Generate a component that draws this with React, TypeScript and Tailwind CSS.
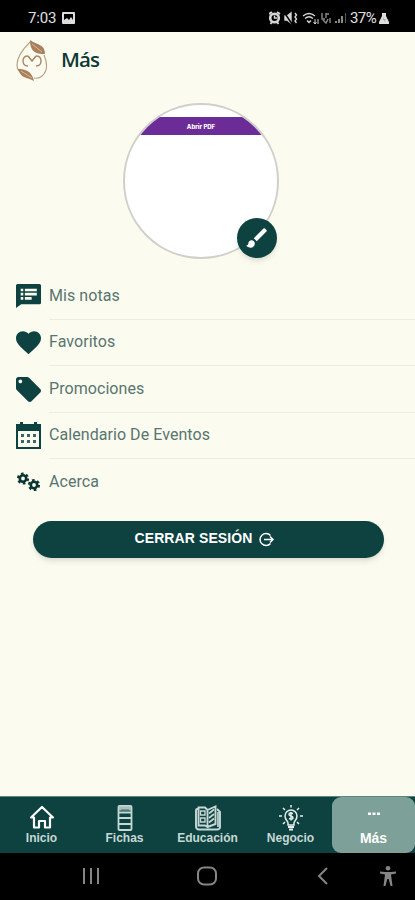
import type { ReactNode } from 'react'

type MenuItem = {
  label: string
  icon: ReactNode
}

type TabItem = {
  label: string
  icon: ReactNode
}

const NotesIcon = () => (
  <svg className="size-[25px]" viewBox="0 0 24 24" fill="#0d4240">
    <path fillRule="evenodd" d="M1.500 0H22.500Q24 0 24 1.500V18Q24 19.500 22.500 19.500H5L0 23V1.500Q0 0 1.500 0ZM4.500 4.500V7H7V4.500ZM8.500 4.500V7H20V4.500ZM4.500 8.500V11H7V8.500ZM8.500 8.500V11H20V8.500ZM4.500 12.500V15H7V12.500ZM8.500 12.500V15H15V12.500Z" />
  </svg>
)

const HeartIcon = () => (
  <svg className="size-[25px]" viewBox="2 2 20 20" fill="#0d4240">
    <path d="m12 21.350-1.450-1.320C5.400 15.360 2 12.280 2 8.500 2 5.420 4.420 3 7.500 3c1.740 0 3.410.81 4.500 2.090C13.090 3.810 14.760 3 16.500 3 19.580 3 22 5.420 22 8.500c0 3.780-3.400 6.860-8.550 11.540z" />
  </svg>
)

const TagIcon = () => (
  <svg className="size-[25px]" viewBox="2 2 20 20" fill="#0d4240">
    <path d="m21.410 11.580-9-9C12.050 2.220 11.550 2 11 2H4c-1.100 0-2 .9-2 2v7c0 .55.220 1.050.590 1.420l9 9c.36.36.86.58 1.410.58s1.050-.22 1.410-.59l7-7c.37-.36.590-.86.590-1.410s-.23-1.060-.59-1.420M5.500 7C4.670 7 4 6.330 4 5.500S4.670 4 5.500 4 7 4.670 7 5.500 6.330 7 5.500 7" />
  </svg>
)

const CalendarIcon = () => (
  <svg className="h-[27px] w-[25px]" viewBox="0 0 25 27" fill="#0d4240">
    <path fillRule="evenodd" d="M0 2H4V0H7V2H18V0H21V2H25V27H0ZM2 9V25H23V9Z" />
    <path d="M5 12h3v3H5zM11 12h3v3h-3zM17 12h3v3h-3zM5 18h3v3H5zM11 18h3v3h-3zM17 18h3v3h-3z" fill="#3d6762" />
  </svg>
)

const GearsIcon = () => (
  <svg className="h-[20px] w-[25px]" viewBox="0 0 25 20" fill="none" stroke="#0a3532">
    <circle cx="7" cy="6.500" r="3.200" strokeWidth="2.600" />
    <circle cx="7" cy="6.500" r="5" strokeWidth="2.200" strokeDasharray="2.600 2.636" />
    <circle cx="18" cy="13" r="3.200" strokeWidth="2.600" />
    <circle cx="18" cy="13" r="5" strokeWidth="2.200" strokeDasharray="2.600 2.636" />
  </svg>
)

const menu: MenuItem[] = [
  { label: 'Mis notas', icon: <NotesIcon /> },
  { label: 'Favoritos', icon: <HeartIcon /> },
  { label: 'Promociones', icon: <TagIcon /> },
  { label: 'Calendario De Eventos', icon: <CalendarIcon /> },
  { label: 'Acerca', icon: <GearsIcon /> },
]

const HomeIcon = () => (
  <svg className="h-[25px] w-[26px]" viewBox="0 0 26 25" fill="none" stroke="#fff" strokeWidth="2.200" strokeLinejoin="round">
    <path d="M13 2 2 12.500H5V22.500H10V16H16V22.500H21V12.500H24Z" />
  </svg>
)

const CardsIcon = () => (
  <svg className="h-[26px] w-[16px]" viewBox="0 0 16 26" fill="none" stroke="#c6d8d5" strokeWidth="1.800">
    <rect x="1.500" y="1" width="13" height="24" rx="1" />
    <path d="M2 7.500H14M2 13H14M2 19H14" />
    <path d="M2 3.500H14" strokeWidth="4" stroke="#a5bfbb" />
    <path d="M4 5H12" strokeWidth="1" stroke="#49736e" />
  </svg>
)

const NewsIcon = () => (
  <svg className="h-[26px] w-[27px]" viewBox="0 0 27 26" fill="none" stroke="#c6d8d5" strokeWidth="1.900">
    <path d="M4 4H3Q2 4 2 6V21Q2 24.500 5 24.500H23Q26 24.500 26 22V7L23 4" />
    <path d="M4.500 2.500H11L13.500 5V22L11 20.500H4.500ZM13.500 5 21.500 1.500V19L13.500 22" />
    <path d="M6.500 6H11V10H6.500ZM6.500 13H11V17H6.500Z" strokeWidth="1.400" />
    <path d="m15 8.500 5-4M15 13l5-4M15 17.500l5-4M24 7V22" strokeWidth="1.700" />
  </svg>
)

const IdeaIcon = () => (
  <svg className="h-[26px] w-[24px]" viewBox="0 0 24 26" fill="none" stroke="#e5eeec" strokeWidth="1.500">
    <path d="M9 20V18C9 16 6 15 6 11a6 6 0 0 1 12 0c0 4-3 5-3 7v2Z" />
    <path d="M9 22H15M10 24.500H14" strokeWidth="2" />
    <path d="M12 0V2.500M4 3l2 2M20 3l-2 2M0 11H3M21 11H24M4 19l2-2M20 19l-2-2" />
    <path d="M14 8.500Q10 7 10 9.500C10 11.500 14 10.500 14 13Q13.500 15 10 13.500M12 7V15.500" />
  </svg>
)

const DotsIcon = () => (
  <svg className="h-[25px] w-[14px]" viewBox="0 0 14 25" fill="#fff">
    <path d="M1 7.500h3v2.500H1zM5.500 7.500h3v2.500h-3zM10 7.500h3v2.500h-3z" />
  </svg>
)

const tabs: TabItem[] = [
  { label: 'Inicio', icon: <HomeIcon /> },
  { label: 'Fichas', icon: <CardsIcon /> },
  { label: 'Educación', icon: <NewsIcon /> },
  { label: 'Negocio', icon: <IdeaIcon /> },
  { label: 'Más', icon: <DotsIcon /> },
]

const StatusBar = () => (
  <div className="flex h-[32px] items-center justify-between bg-black pt-[3px] pr-[26px] pl-[28px] text-[#e0e0e0]">
    <div className="flex items-center gap-[5px]">
      <span className="w-[29px] text-[15px]/[20px] tracking-[-0.200px]">7:03</span>
      <svg className="h-[12px] w-[13px]" viewBox="0 0 13 12" fill="#ddd">
        <path fillRule="evenodd" d="M1 0H12Q13 0 13 1V11Q13 12 12 12H1Q0 12 0 11V1Q0 0 1 0ZM2 2V8L5 6L7 8L9 5L11 8V2Z" />
      </svg>
    </div>
    <div className="flex items-center">
      <svg className="h-[14px] w-[77px]" viewBox="0 0 77 14" fill="none" stroke="#d5d5d5" strokeWidth="1.400">
        <circle cx="5.500" cy="7" r="4.300" strokeWidth="2.600" />
        <path d="M0 3 3 1M11 3 8 1M1.500 13 3 11M9.500 13 8 11" strokeWidth="2" />
        <path d="M5.500 4.500V7H8" />
        <path d="M16 5H18L22 2V12L18 9H16Z" fill="#d5d5d5" />
        <path d="m15 1 8 12" stroke="#000" />
        <path d="m26 2 1.500 2-1.500 2 1.500 2-1.500 2 1.500 2" />
        <path d="M34 5Q40 0 46 5M36 7.500Q40 4 44 7.500M38 9.500 40 11.500 42 9.500" />
        <path d="M46 8V13M44.500 11 46 13 47.500 11M49 13V8" strokeWidth="1" />
        <path d="M53 2V8H56M57 2V7M57 3H60M54 9 57 12 59 8M61 7V12" stroke="#888" />
        <path d="M67 12V10M70 12V8M73 12V5" stroke="#888" strokeWidth="2" />
        <path d="M76.500 12V2" stroke="#555" strokeWidth="1" />
      </svg>
      <span className="ml-[4px] w-[29px] text-[15px]/[20px] tracking-[-0.600px]">37%</span>
      <svg className="h-[12px] w-[10px]" viewBox="0 0 10 12" fill="#ddd">
        <path d="M3 1H7V4L10 10V12H0V10L3 4Z" />
        <path d="M5 5 3.500 8H5V10L7 7H5Z" fill="#aaa" />
      </svg>
    </div>
  </div>
)

const Logo = () => (
  <svg className="h-[43px] w-[32px]" viewBox="0 0 32 43" fill="none" stroke="#a98765">
    <path d="M14 3C9 8 1 17 1 26Q1 30 3 32M28 16Q34 30 26 37Q23 40 18 39" stroke="#b9a588" strokeWidth="1.200" />
    <path d="M14 1C21 6 29 5 29 15C20 15 14 13 14 1Z" fill="#a9805a" stroke="none" />
    <path d="M2 30C9 30 16 32 18 42C11 38 5 40 2 30Z" fill="#a9805a" stroke="none" />
    <path d="m16 5 10 8M5 32 16 39" stroke="#dfc8ad" strokeWidth=".8" />
    <path d="M12 17Q7 17 7 22T12 27M20 17Q25 17 25 22T20 27" strokeWidth="1.400" />
    <path d="M12 17 16 22 20 17" strokeWidth="1.600" />
  </svg>
)

const Avatar = () => (
  <div className="relative ml-[123px] size-[156px]">
    <div className="size-[156px] overflow-hidden rounded-full border-2 border-[#d0d0cb] bg-white pt-[12px]">
      <div className="flex h-[18px] items-center justify-center bg-[#6b2c98] font-[Inter] text-[6px] font-extrabold text-white">
        Abrir PDF
      </div>
    </div>
    <button className="absolute top-[115px] left-[114px] flex size-[40px] items-center justify-center rounded-full bg-[#0d4240] shadow-md">
      <svg className="size-[26px]" viewBox="0 0 24 24" fill="#fff">
        <path d="M7 14c-1.660 0-3 1.340-3 3 0 1.310-1.160 2-2 2 .92 1.220 2.490 2 4 2 2.210 0 4-1.790 4-4 0-1.660-1.340-3-3-3m13.710-9.370-1.340-1.340a.996.996 0 0 0-1.410 0L9 12.250 11.750 15l8.960-8.960c.39-.39.39-1.020 0-1.410" />
      </svg>
    </button>
  </div>
)

const TabBar = () => (
  <nav className="grid h-[57px] grid-cols-5 border-t border-[#5f8580] bg-[#0d4240] font-['Liberation_Sans'] text-[12px]/[14px] font-bold text-[#c6d8d5]">
    {tabs.map((tab) => (
      <div
        className={
          tab.label === 'Más'
            ? 'flex flex-col items-center rounded-[9px] bg-[#7da198] pt-[7px] text-[14px]/[14px] text-white'
            : 'flex flex-col items-center pt-[7px]'
        }
        key={tab.label}
      >
        <div className="flex h-[27px] items-center">{tab.icon}</div>
        <span>{tab.label}</span>
      </div>
    ))}
  </nav>
)

const AndroidNav = () => (
  <div className="flex h-[47px] items-center bg-black pb-[2px] pl-[82px]">
    <svg className="h-[18px] w-[18px]" viewBox="0 0 18 18" stroke="#858585" strokeWidth="2">
      <path d="M2 1V17M9 1V17M16 1V17" />
    </svg>
    <svg className="ml-[97px] size-[20px]" viewBox="0 0 20 20" fill="none" stroke="#858585" strokeWidth="2">
      <rect x="1" y="1.500" width="18" height="17" rx="6" />
    </svg>
    <svg className="ml-[100px] h-[18px] w-[12px]" viewBox="0 0 12 18" fill="none" stroke="#858585" strokeWidth="2">
      <path d="M10 1 2 9 10 17" />
    </svg>
    <svg className="ml-[51px] h-[20px] w-[16px]" viewBox="0 0 16 20" fill="#858585">
      <circle cx="8" cy="2.300" r="2.300" />
      <path d="M0 5.500 5 6H11L16 5.500V7.500L11 8.500 12.500 20H10.500L8.700 13H7.300L5.500 20H3.500L5 8.500 0 7.500Z" />
    </svg>
  </div>
)

const App = () => {
  return (
    <div className="flex h-[900px] w-full flex-col overflow-hidden bg-[#fbfbef] font-[Roboto]">
      <StatusBar />
      <header className="flex h-[71px] pt-[7px] pl-[16px]">
        <Logo />
        <h1 className="pt-[6px] pl-[13px] font-['Open_Sans'] text-[20.500px]/[28px] font-semibold tracking-[-0.900px] text-[#0d3835]">
          Más
        </h1>
      </header>

      <main className="flex-1">
        <Avatar />
        <ul className="pt-[14px]">
          {menu.map((item) => (
            <li className="group flex h-[46.500px] items-center pl-[16px]" key={item.label}>
              <div className="flex w-[33px]">{item.icon}</div>
              <div className="flex h-full flex-1 items-center border-b border-[#edeee3] text-[16px] tracking-[0.060px] text-[#58756f] group-last:border-transparent">
                {item.label}
              </div>
            </li>
          ))}
        </ul>
        <button className="mx-[33px] mt-[15px] flex h-[37px] w-[351px] items-center justify-center gap-[7px] rounded-full bg-[#0d4240] pr-[8px] pb-[2px] font-['Liberation_Sans'] text-[14px] font-bold tracking-[0.100px] text-white shadow-md">
          CERRAR SESIÓN
          <svg className="mt-[2px] size-[15px]" viewBox="0 0 15 15" fill="none" stroke="#fff" strokeWidth="1.500">
            <path d="M11.500 3.500A6 6 0 1 0 11.500 11.500M5 7.500H14M11 4.500 14 7.500 11 10.500" />
          </svg>
        </button>
      </main>

      <TabBar />
      <AndroidNav />
    </div>
  )
}

export default App
